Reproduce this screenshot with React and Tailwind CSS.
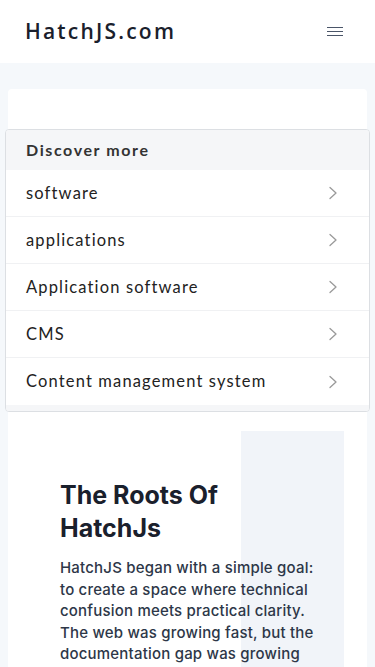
import React from "react";

const items = ["software", "applications", "Application software", "CMS", "Content management system"];

function Chevron() {
  return (
    <svg width="12" height="14" viewBox="0 0 12 14" fill="none" stroke="#9a9a9a" strokeWidth="1.3" strokeLinecap="round" strokeLinejoin="round">
      <path d="M3 1.5 L9 7 L3 12.5" />
    </svg>
  );
}

export default function App() {
  return (
    <div className="min-h-[667px] bg-[#f5f8fb]">
      <header className="h-[63px] bg-white flex items-center justify-between pl-[25px] pr-[32px]">
        <div className="text-[21px] font-semibold tracking-[2.2px] text-[#1a202c] font-['Open_Sans',sans-serif]">HatchJS.com</div>
        <div className="flex flex-col gap-[2.5px]">
          <span className="block w-[16px] h-[1.5px] bg-[#4a5568]"></span>
          <span className="block w-[16px] h-[1.5px] bg-[#4a5568]"></span>
          <span className="block w-[16px] h-[1.5px] bg-[#4a5568]"></span>
        </div>
      </header>
      <main className="px-2 pt-[26px]">
        <div className="bg-white rounded-[4px] pt-[40px] min-h-[600px]">
          <div className="-mx-[3px] border border-[#dcdfe3] rounded-[4px] bg-white overflow-hidden font-['Lato',sans-serif]">
            <div className="h-[40px] bg-[#f5f6f8] flex items-center px-[20px] text-[16px] font-bold tracking-[1.6px] text-[#333]">Discover more</div>
            {items.map((t, i) => (
              <div key={t} className={`h-[47px] flex items-center justify-between pl-[20px] pr-[30px] text-[16.5px] tracking-[1.15px] text-[#222] ${i < items.length - 1 ? "border-b border-[#f0f1f3]" : ""}`}>
                <span>{t}</span>
                <Chevron />
              </div>
            ))}
            <div className="h-[6px] bg-[#f5f6f8]"></div>
          </div>
          <section className="relative mt-[19px] pl-[52px] pr-[40px] pb-10 font-['Inter',sans-serif]">
            <div className="absolute left-[233px] top-0 w-[103px] h-[260px] bg-[#f1f4f9]"></div>
            <div className="relative pt-[48px]">
              <h1 className="text-[25px] leading-[33px] font-bold text-[#1a202c] w-[200px]">The Roots Of HatchJs</h1>
              <p className="mt-[12px] text-[15px] leading-[21.6px] font-medium text-[#2d3748] tracking-[0.2px]">
                HatchJS began with a simple goal: to create a space where technical confusion meets practical clarity. The web was growing fast, but the documentation gap was growing wider.
              </p>
            </div>
          </section>
        </div>
      </main>
    </div>
  );
}
